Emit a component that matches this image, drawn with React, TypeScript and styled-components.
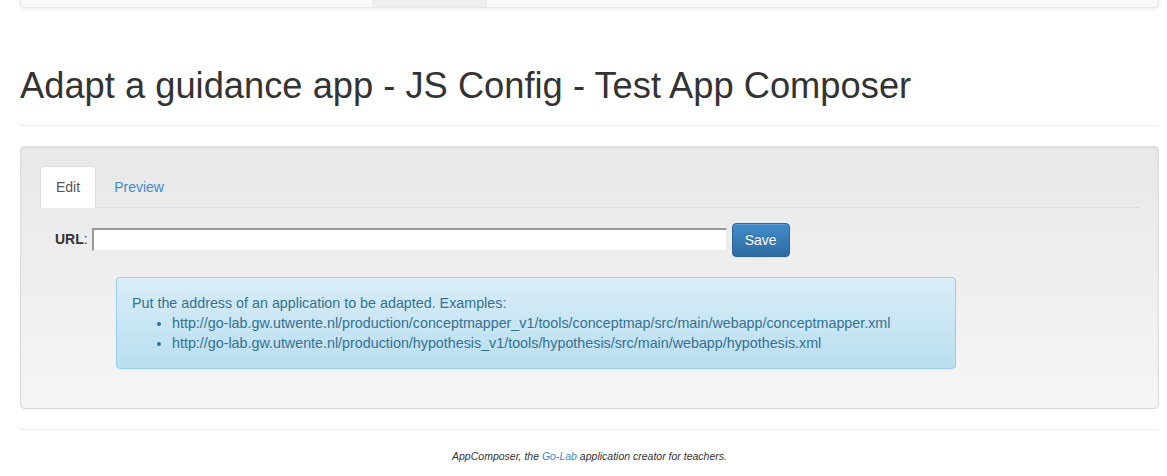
import React from 'react';
import styled, { createGlobalStyle } from 'styled-components';

const GlobalStyle = createGlobalStyle`
  body {
    margin: 0;
    background: #fff;
    font-family: "Liberation Sans", Arial, Helvetica, sans-serif;
    font-size: 14px;
    line-height: 1.428571;
    color: #333;
    overflow: hidden;
  }
`;

const Page = styled.div`
  width: 1139px;
  margin-left: 20px;
`;

const Navbar = styled.div`
  display: flex;
  height: 50px;
  margin-top: -44px;
  background: linear-gradient(to bottom, #fff 0, #f8f8f8 100%);
  border: 1px solid #e7e7e7;
  border-radius: 4px;
  box-shadow: inset 0 1px 0 rgba(255, 255, 255, 0.15), 0 1px 5px rgba(0, 0, 0, 0.075);
`;

const NavItem = styled.div<{ $active?: boolean }>`
  width: 115px;
  margin-left: ${(p) => (p.$active ? '351px' : '0')};
  background: ${(p) => (p.$active ? 'linear-gradient(to bottom, #dbdbdb 0, #f0f0f0 100%)' : 'transparent')};
`;

const PageHeader = styled.div`
  margin-top: 58px;
  padding-bottom: 9px;
  border-bottom: 1px solid #eee;
`;

const Title = styled.h1`
  margin: 20px 0 10px;
  font-size: 36.3px;
  font-weight: 500;
  line-height: 1.1;
  color: #333;
`;

const Well = styled.div`
  margin-top: 20px;
  padding: 19px;
  min-height: 20px;
  border: 1px solid #dcdcdc;
  border-radius: 4px;
  background: linear-gradient(to bottom, #e8e8e8 0, #f5f5f5 100%);
  box-shadow: inset 0 1px 3px rgba(0, 0, 0, 0.05), 0 1px 0 rgba(255, 255, 255, 0.1);
`;

const Tabs = styled.ul`
  display: flex;
  margin: 0;
  padding: 0;
  list-style: none;
  border-bottom: 1px solid #ddd;
`;

const Tab = styled.li<{ $active?: boolean }>`
  margin-bottom: -1px;
  margin-right: 2px;
  padding: 10px 15px;
  line-height: 20px;
  border: 1px solid ${(p) => (p.$active ? '#ddd' : 'transparent')};
  border-bottom-color: transparent;
  border-radius: 4px 4px 0 0;
  background: ${(p) => (p.$active ? '#fff' : 'transparent')};
  color: ${(p) => (p.$active ? '#555' : '#428bca')};
  cursor: pointer;
`;

const FormRow = styled.div`
  display: flex;
  align-items: center;
  margin-top: 15px;
  padding-left: 15px;
`;

const Label = styled.label`
  margin-right: 4px;
  font-weight: 700;

  span {
    font-weight: 400;
  }
`;

const UrlInput = styled.input`
  box-sizing: border-box;
  width: 635px;
  height: 23px;
  margin: 0;
  padding: 1px 2px;
  background: #fff;
  border-style: solid;
  border-width: 2px 1px 1px 2px;
  border-color: #999 #e8e8e8 #e8e8e8 #999;
  font-family: inherit;
  font-size: 14px;
`;

const SaveButton = styled.button`
  margin-left: 5px;
  padding: 6px 12px;
  font-family: inherit;
  font-size: 14px;
  line-height: 20px;
  color: #fff;
  background: linear-gradient(to bottom, #428bca 0, #2d6ca2 100%);
  border: 1px solid #2b669a;
  border-radius: 4px;
  box-shadow: inset 0 1px 0 rgba(255, 255, 255, 0.15), 0 1px 1px rgba(0, 0, 0, 0.075);
  text-shadow: 0 -1px 0 rgba(0, 0, 0, 0.2);
  cursor: pointer;
`;

const InfoBox = styled.div`
  width: 808px;
  margin: 20px 0 20px 76px;
  padding: 15px;
  font-size: 14.3px;
  line-height: 20px;
  color: #31708f;
  background: linear-gradient(to bottom, #d9edf7 0, #b9def0 100%);
  border: 1px solid #9acfea;
  border-radius: 4px;
  box-shadow: inset 0 1px 0 rgba(255, 255, 255, 0.25), 0 1px 2px rgba(0, 0, 0, 0.05);
  text-shadow: 0 1px 0 rgba(255, 255, 255, 0.2);

  p {
    margin: 0;
  }

  ul {
    margin: 0;
    padding-left: 40px;
  }
`;

const Rule = styled.hr`
  margin: 20px 0 0;
  border: 0;
  border-top: 1px solid #eee;
`;

const Footer = styled.p`
  margin: 19px 0 0;
  text-align: center;
  font-size: 10.5px;
  font-style: italic;
  line-height: 14px;

  a {
    color: #428bca;
    text-decoration: none;
  }
`;

const examples = [
  'http://go-lab.gw.utwente.nl/production/conceptmapper_v1/tools/conceptmap/src/main/webapp/conceptmapper.xml',
  'http://go-lab.gw.utwente.nl/production/hypothesis_v1/tools/hypothesis/src/main/webapp/hypothesis.xml',
];

export default function App() {
  return (
    <>
      <GlobalStyle />
      <Page>
        <Navbar>
          <NavItem $active />
        </Navbar>

        <PageHeader>
          <Title>Adapt a guidance app - JS Config - Test App Composer</Title>
        </PageHeader>

        <Well>
          <Tabs>
            <Tab $active>Edit</Tab>
            <Tab>Preview</Tab>
          </Tabs>

          <FormRow>
            <Label>
              URL<span>:</span>
            </Label>
            <UrlInput type="text" />
            <SaveButton>Save</SaveButton>
          </FormRow>

          <InfoBox>
            <p>Put the address of an application to be adapted. Examples:</p>
            <ul>
              {examples.map((url) => (
                <li key={url}>{url}</li>
              ))}
            </ul>
          </InfoBox>
        </Well>

        <Rule />
        <Footer>
          AppComposer, the <a href="#">Go-Lab</a> application creator for teachers.
        </Footer>
      </Page>
    </>
  );
}
